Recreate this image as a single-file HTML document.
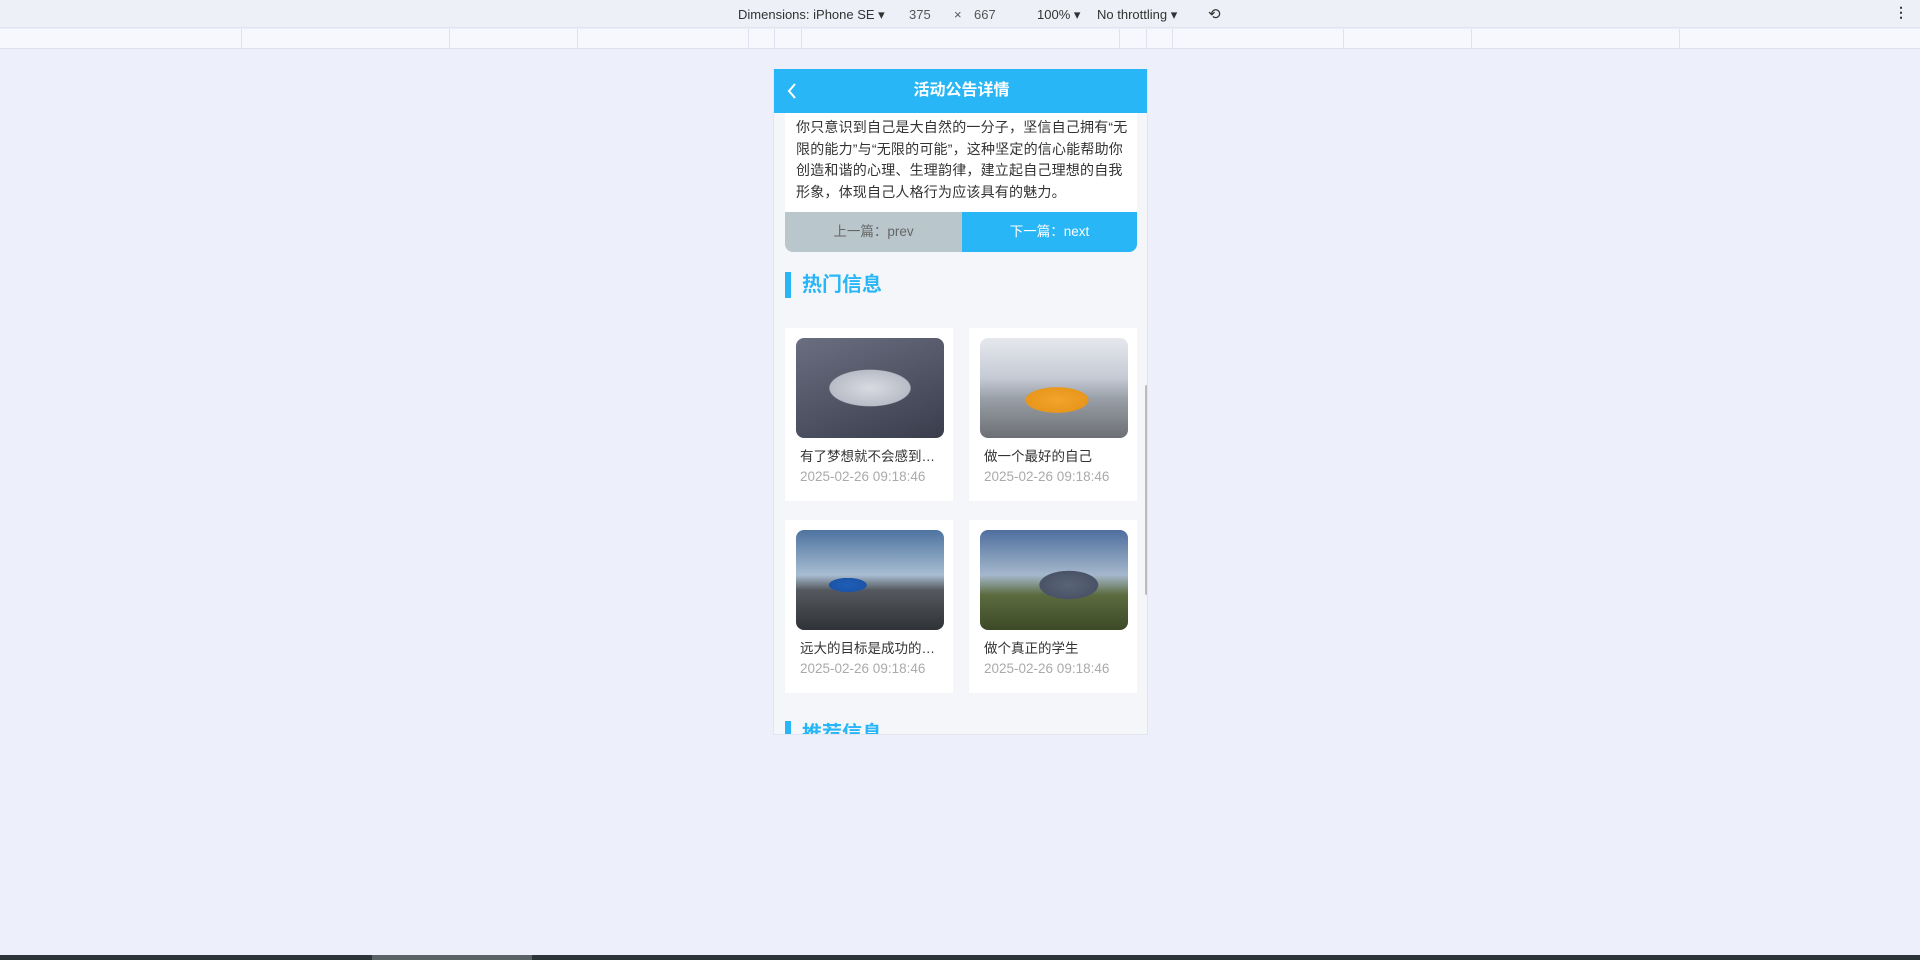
<!DOCTYPE html>
<html><head><meta charset="utf-8">
<style>
*{margin:0;padding:0;box-sizing:border-box}
body{width:1920px;height:960px;overflow:hidden;background:#edf0fa;font-family:"Liberation Sans","Noto Sans CJK SC",sans-serif;position:relative}
.tb{position:absolute;left:0;top:0;width:1920px;height:28px;background:#eef0f7;border-bottom:1px solid #dfe3ec;font-size:13px;color:#333}
.tb span{position:absolute;top:7px}
.ruler{position:absolute;left:0;top:29px;width:1920px;height:20px;background:#f7f8fd;border-bottom:1px solid #dde2ee}
.ruler i{position:absolute;top:0;width:1px;height:20px;background:#dde2ee}
.bottom{position:absolute;left:0;top:955px;width:1920px;height:5px;background:#2b3438}
.phone{position:absolute;left:773px;top:69px;width:375px;height:666px;background:#f5f6fa;overflow:hidden;border:1px solid #e2e5ee;border-top:none}
.hdr{position:absolute;left:0;top:0;width:375px;height:44px;background:#29b6f6;color:#fff;font-size:16px;font-weight:bold;text-align:center;line-height:44px}
.txt{position:absolute;left:11px;top:44px;width:352px;height:99px;background:#fff;padding:4px 11px 0;font-size:14px;line-height:21.5px;color:#333;white-space:nowrap;letter-spacing:0.2px}
.btns{position:absolute;left:11px;top:143px;width:352px;height:40px;border-radius:0 0 8px 8px;overflow:hidden;font-size:13.5px;line-height:40px;text-align:center}
.btns div{position:absolute;top:0;height:40px}
.h2{position:absolute;left:11px;font-size:20px;font-weight:bold;color:#29b6f6;padding-left:17px;height:26px;line-height:26px}
.h2:before{content:"";position:absolute;left:0;top:0;width:6px;height:26px;background:#29b6f6}
.card{position:absolute;width:168px;height:173px;background:#fff}
.img{position:absolute;left:11px;top:10px;width:148px;height:100px;border-radius:8px;overflow:hidden}
.t{position:absolute;left:15px;top:117px;width:140px;font-size:13.5px;color:#333;white-space:nowrap;overflow:hidden;text-overflow:ellipsis}
.d{position:absolute;left:15px;top:141px;font-size:13.5px;color:#aaa}
.sb{position:absolute;left:371px;top:316px;width:3px;height:210px;background:#bbb;border-radius:2px}
</style></head><body>
<div class="tb">
<span style="left:738px">Dimensions: iPhone SE ▾</span>
<span style="left:909px;color:#555">375</span>
<span style="left:954px;color:#555">×</span>
<span style="left:974px;color:#555">667</span>
<span style="left:1037px">100% ▾</span>
<span style="left:1097px">No throttling ▾</span>
<span style="left:1208px;font-size:15px;top:5px">⟲</span>
<span style="left:1894px;font-weight:bold;top:4px;font-size:14px">⋮</span>
</div>
<div class="ruler">
<i style="left:241px"></i><i style="left:449px"></i><i style="left:577px"></i><i style="left:748px"></i><i style="left:774px"></i><i style="left:801px"></i><i style="left:1119px"></i><i style="left:1146px"></i><i style="left:1172px"></i><i style="left:1343px"></i><i style="left:1471px"></i><i style="left:1679px"></i>
</div>
<div class="bottom"><div style="position:absolute;left:372px;width:160px;height:5px;background:#5a6266"></div></div>

<div class="phone">
<div class="hdr"><svg style="position:absolute;left:12px;top:13px" width="12" height="18" viewBox="0 0 12 18"><path d="M9 2 L3 9 L9 16" stroke="#fff" stroke-width="2" fill="none"/></svg>活动公告详情</div>
<div class="txt">你只意识到自己是大自然的一分子，坚信自己拥有“无<br>限的能力”与“无限的可能”，这种坚定的信心能帮助你<br>创造和谐的心理、生理韵律，建立起自己理想的自我<br>形象，体现自己人格行为应该具有的魅力。</div>
<div class="btns">
<div style="left:0;width:177px;background:#b9c6cc;color:#666">上一篇：prev</div>
<div style="left:177px;width:175px;background:#29b6f6;color:#fff">下一篇：next</div>
</div>
<div class="h2" style="top:203px">热门信息</div>

<div class="card" style="left:11px;top:259px"><div class="img" style="background:radial-gradient(ellipse 45% 30% at 50% 50%,#d8dbe2 0,#b9bcc6 60%,transparent 62%),linear-gradient(160deg,#6a6e80,#3a3d4c)"></div><div class="t">有了梦想就不会感到迷茫</div><div class="d">2025-02-26 09:18:46</div></div>
<div class="card" style="left:195px;top:259px"><div class="img" style="background:radial-gradient(ellipse 30% 18% at 52% 62%,#f3a42a 0,#e8961c 70%,transparent 72%),linear-gradient(180deg,#e6e8ee 0,#c5cad4 40%,#9aa0a8 60%,#6c6f74 100%)"></div><div class="t">做一个最好的自己</div><div class="d">2025-02-26 09:18:46</div></div>
<div class="card" style="left:11px;top:451px"><div class="img" style="background:radial-gradient(ellipse 18% 10% at 35% 55%,#1f5fb8 0,#1c54a8 70%,transparent 72%),linear-gradient(180deg,#4d73a0 0,#a8bdd2 45%,#55595f 60%,#2f3236 100%)"></div><div class="t">远大的目标是成功的开始</div><div class="d">2025-02-26 09:18:46</div></div>
<div class="card" style="left:195px;top:451px"><div class="img" style="background:radial-gradient(ellipse 28% 20% at 60% 55%,#5a6478 0,#4a5366 70%,transparent 72%),linear-gradient(180deg,#4e6e9e 0,#a5b8cc 45%,#5b6b3e 65%,#3d4a28 100%)"></div><div class="t">做个真正的学生</div><div class="d">2025-02-26 09:18:46</div></div>

<div class="h2" style="top:652px">推荐信息</div>
<div class="sb"></div>
</div>
</body></html>
